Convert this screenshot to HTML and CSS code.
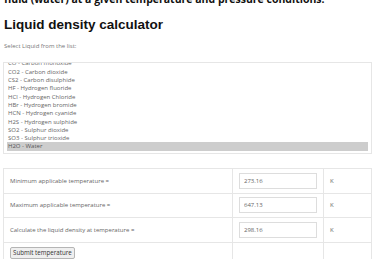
FILE: index.html
```html
<!DOCTYPE html>
<html lang="en">

<head>
    <meta charset="UTF-8">
    <title>Liquid density calculator</title>
    <link rel="stylesheet" href="styles.css">
</head>

<body>
    <div class="container">
        <p class="intro">fluid (water) at a given temperature and pressure conditions.</p>

        <h1>Liquid density calculator</h1>

        <div class="select-label">Select Liquid from the list:</div>
        <div id="liquid" class="liquid-list"></div>

        <table class="temp-table">
            <tr>
                <td>Minimum applicable temperature =</td>
                <td class="value"><input type="text" value="273.16"></td>
                <td class="unit">K</td>
            </tr>
            <tr>
                <td>Maximum applicable temperature =</td>
                <td class="value"><input type="text" value="647.13"></td>
                <td class="unit">K</td>
            </tr>
            <tr>
                <td>Calculate the liquid density at temperature =</td>
                <td class="value"><input type="text" value="298.16"></td>
                <td class="unit">K</td>
            </tr>
            <tr>
                <td><button type="button">Submit temperature</button></td>
                <td class="value"></td>
                <td class="unit"></td>
            </tr>
        </table>
    </div>

    <script>
        // Liquids available in the calculator
        const liquids = [
            'CH4 - Methane', 'C2H6 - Ethane', 'C3H8 - Propane', 'C4H10 - n-Butane', 'C4H10 - Isobutane',
            'C5H12 - n-Pentane', 'C5H12 - Isopentane', 'C6H14 - n-Hexane', 'C7H16 - n-Heptane',
            'C8H18 - n-Octane', 'C9H20 - n-Nonane', 'C10H22 - n-Decane', 'C11H24 - n-Undecane',
            'C12H26 - n-Dodecane', 'C2H4 - Ethylene', 'C3H6 - Propylene', 'C4H8 - 1-Butene',
            'C2H2 - Acetylene', 'C6H6 - Benzene', 'C7H8 - Toluene', 'C8H10 - Ethylbenzene',
            'C8H10 - o-Xylene', 'C8H10 - m-Xylene', 'C8H10 - p-Xylene', 'C8H8 - Styrene',
            'C10H8 - Naphthalene', 'C6H12 - Cyclohexane', 'C5H10 - Cyclopentane',
            'CH4O - Methanol', 'C2H6O - Ethanol', 'C3H8O - 1-Propanol', 'C3H8O - Isopropanol',
            'C4H10O - 1-Butanol', 'C2H6O2 - Ethylene glycol', 'C3H8O3 - Glycerol',
            'C6H6O - Phenol', 'CH2O - Formaldehyde', 'C2H4O - Acetaldehyde', 'C3H6O - Acetone',
            'C4H8O - Methyl ethyl ketone', 'CH2O2 - Formic acid', 'C2H4O2 - Acetic acid',
            'C3H6O2 - Propionic acid', 'C4H8O2 - Ethyl acetate', 'C3H6O2 - Methyl acetate',
            'C4H10O - Diethyl ether', 'C4H8O - Tetrahydrofuran', 'C4H8O2 - 1,4-Dioxane',
            'CH3Cl - Methyl chloride', 'CH2Cl2 - Dichloromethane', 'CHCl3 - Chloroform',
            'CCl4 - Carbon tetrachloride', 'C2H5Cl - Ethyl chloride', 'C2H3Cl - Vinyl chloride',
            'C6H5Cl - Chlorobenzene', 'CH5N - Methylamine', 'C2H7N - Ethylamine',
            'C6H7N - Aniline', 'C5H5N - Pyridine', 'C2H3N - Acetonitrile', 'C3H7NO - Dimethylformamide',
            'C2H6OS - Dimethyl sulfoxide', 'CH4S - Methyl mercaptan', 'C2H6S - Dimethyl sulfide',
            'H2 - Hydrogen', 'He - Helium', 'Ne - Neon', 'Ar - Argon', 'Kr - Krypton', 'Xe - Xenon',
            'N2 - Nitrogen', 'O2 - Oxygen', 'F2 - Fluorine', 'Cl2 - Chlorine', 'Br2 - Bromine',
            'NH3 - Ammonia', 'N2O - Nitrous oxide', 'NO - Nitric oxide', 'NO2 - Nitrogen dioxide',
            'CO - Carbon monoxide', 'CO2 - Carbon dioxide', 'CS2 - Carbon disulphide',
            'HF - Hydrogen fluoride', 'HCl - Hydrogen Chloride', 'HBr - Hydrogen bromide',
            'HCN - Hydrogen cyanide', 'H2S - Hydrogen sulphide', 'SO2 - Sulphur dioxide',
            'SO3 - Sulphur trioxide', 'H2O - Water'
        ];

        const list = document.getElementById('liquid');

        liquids.forEach(function (name) {
            const item = document.createElement('div');
            item.className = 'liquid-item';
            item.textContent = name;
            if (name === 'H2O - Water') {
                item.classList.add('selected');
            }
            list.appendChild(item);
        });

        // Keep the selected liquid in view
        list.scrollTop = list.scrollHeight;
    </script>
</body>

</html>
```

FILE: styles.css
```css
/* General Styles */
* {
    margin: 0;
    padding: 0;
    box-sizing: border-box;
}

body {
    font-family: 'Open Sans', sans-serif;
    font-size: 6px;
    color: #666;
    background-color: #fff;
    overflow: hidden;
}

.container {
    padding: 0 7px 0 3px;
}

.intro {
    font-size: 10.5px;
    font-weight: bold;
    color: #111;
    line-height: 14px;
    margin: -7.6px 0 0 1px;
    white-space: nowrap;
}

h1 {
    font-family: 'Liberation Sans', Arial, sans-serif;
    font-size: 13.5px;
    color: #111;
    line-height: 16px;
    margin: 10.6px 0 0 1px;
}

.select-label {
    margin: 9px 0 0 1px;
    line-height: 8px;
    color: #777;
}

/* Liquid list box */
.liquid-list {
    height: 92px;
    margin-top: 12px;
    padding: 2px 0 2px 3px;
    border: 1px solid #e6e6e6;
    color: #666;
    overflow-y: scroll;
}

.liquid-item {
    height: 8.3px;
    line-height: 8.3px;
    padding-left: 1px;
    margin-right: 3px;
    white-space: nowrap;
}

.liquid-item.selected {
    background-color: #cdcdcd;
    color: #555;
}

.liquid-list::-webkit-scrollbar {
    width: 10px;
}

.liquid-list::-webkit-scrollbar-track {
    background-color: #f1f1f1;
}

.liquid-list::-webkit-scrollbar-thumb {
    background-color: #c1c1c1;
    border: 1px solid #f1f1f1;
}

.liquid-list::-webkit-scrollbar-button:single-button {
    display: block;
    height: 10px;
    background-color: #f1f1f1;
    background-repeat: no-repeat;
    background-position: center;
}

.liquid-list::-webkit-scrollbar-button:single-button:vertical:decrement {
    background-image: url("data:image/svg+xml;utf8,<svg xmlns='http://www.w3.org/2000/svg' width='4' height='3'><path d='M0 3L2 0L4 3Z' fill='%23555'/></svg>");
}

.liquid-list::-webkit-scrollbar-button:single-button:vertical:increment {
    background-image: url("data:image/svg+xml;utf8,<svg xmlns='http://www.w3.org/2000/svg' width='4' height='3'><path d='M0 0L4 0L2 3Z' fill='%23aaa'/></svg>");
}

/* Temperature table */
.temp-table {
    width: 369px;
    margin-top: 14px;
    border-collapse: collapse;
}

.temp-table td {
    border: 1px solid #e6e6e6;
    padding: 0 6px;
    height: 24.5px;
    vertical-align: middle;
}

.temp-table .value {
    width: 90px;
}

.temp-table .unit {
    width: 48px;
}

.temp-table input {
    display: block;
    width: 78px;
    height: 16px;
    padding: 0 4px;
    border: 1px solid #ddd;
    font-family: 'Open Sans', sans-serif;
    font-size: 6px;
    color: #666;
}

.temp-table button {
    display: block;
    margin-top: -2px;
    font-family: 'Open Sans', sans-serif;
    font-size: 6.2px;
    line-height: 8px;
    color: #333;
    padding: 1px 2px;
    background-color: #efefef;
    border: 1px solid #b5b5b5;
    border-radius: 2px;
}
```
